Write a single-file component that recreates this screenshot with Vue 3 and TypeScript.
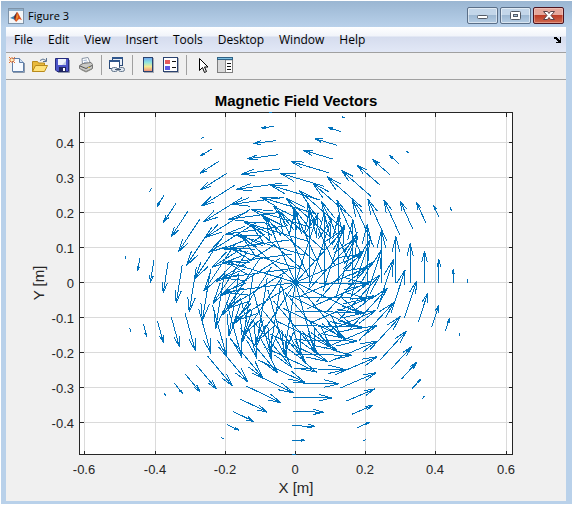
<script setup lang="ts">
interface Tick {
  pos: number
  label: string
}

const menus: string[] = ['File', 'Edit', 'View', 'Insert', 'Tools', 'Desktop', 'Window', 'Help']

// Axes box and origin, in drawing units
const box = { left: 73, right: 506, top: 32, bottom: 374 }
const origin = { x: 289, y: 202 }
const unit = 351

const xTicks: Tick[] = [-0.6, -0.4, -0.2, 0, 0.2, 0.4, 0.6].map((v) => ({
  pos: Math.round(origin.x + v * unit),
  label: String(v),
}))
const yTicks: Tick[] = [-0.4, -0.3, -0.2, -0.1, 0, 0.1, 0.2, 0.3, 0.4].map((v) => ({
  pos: Math.round(origin.y - v * 350),
  label: String(v),
}))

// Azimuthal field sampled on a polar grid; arrow length per ring
const rayCount = 15
const angleStep = (2 * Math.PI * 0.95) / (rayCount - 1)
const ringStep = (0.49 * unit) / 12
const lengths: number[] = [73, 72, 70, 67, 63, 58, 52, 46, 39, 31, 23, 13, 3]

function arrow(ray: number, ring: number): string {
  const a = ray * angleStep
  const x = origin.x + ring * ringStep * Math.cos(a)
  const y = origin.y - ring * ringStep * Math.sin(a)
  const u = -Math.sin(a) * lengths[ring]
  const v = -Math.cos(a) * lengths[ring]
  const tx = x + u
  const ty = y + v
  const alpha = 0.33
  const beta = 0.25
  const p = (px: number, py: number) => `${px.toFixed(1)} ${py.toFixed(1)}`
  const w1 = p(tx - alpha * (u + beta * v), ty - alpha * (v - beta * u))
  const w2 = p(tx - alpha * (u - beta * v), ty - alpha * (v + beta * u))
  return `M${p(x, y)}L${p(tx, ty)}M${w1}L${p(tx, ty)}L${w2}`
}

const field: string = Array.from({ length: rayCount }, (_, ray) =>
  lengths.map((_l, ring) => arrow(ray, ring)).join(''),
).join('')
</script>

<template>
  <main class="window">
    <header class="titlebar">
      <svg class="logo" viewBox="0 0 16 16" aria-hidden="true">
        <rect x="0.5" y="0.5" width="15" height="15" fill="#f4f6f8" stroke="#7f93a8" />
        <rect x="1" y="1" width="14" height="2" fill="#8fb0cc" />
        <path d="M2 10 6 8 9 4 7 12 5 11Z" fill="#3c7fae" />
        <path d="M9 4 6 9 7 13 9 11Z" fill="#7c2418" />
        <path d="M9 4C10 4 12 9 14 12L11 11 8 14 7 12Q8 9 9 4Z" fill="#d9501e" />
        <path d="M9 5 10 9 8 13Z" fill="#f4a031" />
      </svg>
      <h1 class="caption">Figure 3</h1>
      <div class="controls">
        <button type="button" class="control" aria-label="Minimize">
          <svg viewBox="0 0 29 15"><rect x="9.500" y="7.500" width="10" height="3" rx="1" fill="#fff" stroke="#545b66" /></svg>
        </button>
        <button type="button" class="control" aria-label="Maximize">
          <svg viewBox="0 0 29 15">
            <rect x="9.500" y="3.500" width="10" height="8" rx="1" fill="#fff" stroke="#545b66" />
            <rect x="12.500" y="6.500" width="4" height="2" fill="#a9c3dc" stroke="#545b66" />
          </svg>
        </button>
        <button type="button" class="control close" aria-label="Close">
          <svg viewBox="0 0 29 15">
            <path d="M9.500 3.500h4l1.500 2 1.500-2h4l-3.500 4 3.500 4h-4l-1.500-2-1.500 2h-4l3.500-4z" fill="#fff" stroke="#5c4248" />
          </svg>
        </button>
      </div>
    </header>

    <div class="content">
      <nav class="menubar">
        <button v-for="menu in menus" :key="menu" type="button" class="menu">{{ menu }}</button>
        <button type="button" class="dock" aria-label="Dock figure">
          <svg viewBox="0 0 8 8"><path d="M0 1h3v1h1v1h1v1h1V1h1v6H2V6h2V5H3V4H2V3H0z" fill="#000" shape-rendering="crispEdges" /></svg>
        </button>
      </nav>

      <div class="toolbar" role="toolbar" aria-label="Figure tools">
        <button type="button" class="tool" aria-label="New figure">
          <svg viewBox="0 0 16 16">
            <path d="M3.500 1.500h7l4 4v9h-11z" fill="#f6faff" stroke="#5f7ea8" />
            <path d="M10.500 1.500v4h4" fill="#cfe0f4" stroke="#5f7ea8" />
            <path d="M15.500 6v9.500H4" fill="none" stroke="#8c99aa" />
            <path d="M0 0 6 6M6 0 0 6M3 0v6M0 3h6" stroke="#e2702f" />
            <rect x="2" y="2" width="2" height="2" fill="#fff3b8" />
          </svg>
        </button>
        <button type="button" class="tool" aria-label="Open file">
          <svg viewBox="0 0 16 16">
            <path d="M.5 14.500v-10h5l1 1.500h6v3" fill="#e9b93c" stroke="#b88a1c" />
            <path d="M.5 14.500 3.500 8.500h12l-3 6z" fill="#ffe27a" stroke="#b88a1c" />
            <path d="M8 3.500q3-3 6 0M14.500 1v3.500H11" fill="none" stroke="#5c7391" />
          </svg>
        </button>
        <button type="button" class="tool" aria-label="Save figure">
          <svg viewBox="0 0 16 16">
            <path d="M0.500 1.500h13v13H2l-1.500-1.500z" fill="#4c55c8" stroke="#252b7c" />
            <path d="M14.500 3v12.500H3" fill="none" stroke="#9098ad" />
            <rect x="3" y="2" width="8" height="6" fill="#eef2fb" />
            <path d="M7 8 11 4v4z" fill="#c2cee6" />
            <rect x="4" y="10" width="7" height="5" fill="#1f255f" />
            <rect x="8" y="11" width="2" height="3" fill="#fff" />
          </svg>
        </button>
        <button type="button" class="tool" aria-label="Print figure">
          <svg viewBox="0 0 16 16">
            <path d="M4.500 7.500 4 1.500l6-1 2.500 6" fill="#fff" stroke="#8894a5" />
            <path d="M5.500 3.500 9 3M6 5.500 10 5" stroke="#9bb1d0" />
            <path d="M1.500 8.500 5 6.500l8-1 1.500 2v4L8 14.500l-6.500-3z" fill="#c9c9c5" stroke="#777" />
            <path d="M2 9 8 11.500 14 8.500" fill="none" stroke="#555" />
            <path d="M3 12.500 8 15l6-3" fill="none" stroke="#8e8e88" />
            <rect x="10" y="10" width="2" height="1" fill="#d6b53c" />
          </svg>
        </button>
        <span class="divider"></span>
        <button type="button" class="tool" aria-label="Link plot">
          <svg viewBox="0 0 16 16">
            <rect x="3.500" y="0.500" width="10" height="8" fill="#e9eff7" stroke="#2b4a78" />
            <rect x="3" y="0" width="11" height="2" fill="#31578d" />
            <rect x="0.500" y="3.500" width="10" height="8" fill="#fff" stroke="#2b4a78" />
            <rect x="0" y="3" width="11" height="2" fill="#31578d" />
            <rect x="2.500" y="10.500" width="6" height="4" rx="2" fill="#dfe7f0" stroke="#66788e" />
            <rect x="9.500" y="10.500" width="6" height="4" rx="2" fill="#dfe7f0" stroke="#66788e" />
            <path d="M6 12.500h6" stroke="#42556d" />
          </svg>
        </button>
        <span class="divider"></span>
        <button type="button" class="tool" aria-label="Insert colorbar">
          <svg viewBox="0 0 16 16">
            <defs>
              <linearGradient id="spectrum" x1="0" y1="0" x2="0" y2="1">
                <stop offset="0" stop-color="#6ea4f2" />
                <stop offset="0.350" stop-color="#8ee5df" />
                <stop offset="0.650" stop-color="#f5ea92" />
                <stop offset="1" stop-color="#ef8a78" />
              </linearGradient>
            </defs>
            <rect x="4" y="1" width="10" height="15" fill="#a9adb5" />
            <rect x="3.500" y="0.500" width="9" height="14" fill="url(#spectrum)" stroke="#2a426f" />
          </svg>
        </button>
        <button type="button" class="tool" aria-label="Insert legend">
          <svg viewBox="0 0 16 16">
            <rect x="1" y="1" width="15" height="15" fill="#a9adb5" />
            <rect x="0.500" y="0.500" width="14" height="14" fill="#fff" stroke="#2a426f" />
            <rect x="2" y="3" width="5" height="4" fill="#e65c5c" />
            <rect x="2" y="9" width="5" height="4" fill="#5c5ce6" />
            <path d="M9 4.500h4M9 10.500h4" stroke="#111" />
          </svg>
        </button>
        <span class="divider"></span>
        <button type="button" class="tool" aria-label="Edit plot">
          <svg viewBox="0 0 16 16">
            <path d="M5.500 1.500v12l3-3 2 5 2-1-2-4.500h3.500z" fill="#fff" stroke="#000" />
          </svg>
        </button>
        <button type="button" class="tool" aria-label="Open property inspector">
          <svg viewBox="0 0 16 16">
            <rect x="0.500" y="0.500" width="15" height="15" fill="#d9d9d9" stroke="#7e7e7e" />
            <rect x="0" y="0" width="16" height="3" fill="#2f6285" />
            <rect x="1" y="1" width="14" height="1" fill="#7fc0e2" />
            <rect x="9" y="4" width="6" height="11" fill="#fff" />
            <path d="M8.500 3v12" stroke="#8c8c8c" />
            <path d="M10 6.500h4M10 9.500h4M10 12.500h4" stroke="#111" />
          </svg>
        </button>
      </div>

      <svg class="figure" viewBox="0 0 560 421" role="img" aria-label="Magnetic Field Vectors">
        <g class="crisp" transform="translate(0.500 0.500)">
          <rect :x="box.left" :y="box.top" :width="box.right - box.left" :height="box.bottom - box.top" fill="#fff" />
          <g stroke="#dadada">
            <path v-for="t in xTicks" :key="t.label" :d="`M${t.pos} ${box.top}V${box.bottom}`" />
            <path v-for="t in yTicks" :key="t.label" :d="`M${box.left} ${t.pos}H${box.right}`" />
          </g>
          <g stroke="#262626" fill="none">
            <rect :x="box.left" :y="box.top" :width="box.right - box.left" :height="box.bottom - box.top" />
            <path v-for="t in xTicks" :key="t.label" :d="`M${t.pos} ${box.top}v4M${t.pos} ${box.bottom}v-4`" />
            <path v-for="t in yTicks" :key="t.label" :d="`M${box.left} ${t.pos}h4M${box.right} ${t.pos}h-4`" />
          </g>
          <path :d="field" stroke="#0072bd" fill="none" />
        </g>
        <text class="title" x="290" y="26">Magnetic Field Vectors</text>
        <g class="ticks">
          <text v-for="t in xTicks" :key="t.label" :x="t.pos" y="394" text-anchor="middle">{{ t.label }}</text>
          <text v-for="t in yTicks" :key="t.label" x="68" :y="t.pos + 6" text-anchor="end">{{ t.label }}</text>
        </g>
        <text class="axis" x="290" y="413">X [m]</text>
        <text class="axis" transform="translate(38 203) rotate(-90)">Y [m]</text>
      </svg>
    </div>
  </main>
</template>

<style>
body {
  background: #fff;
}
</style>

<style scoped>
.window {
  margin: 1px;
  padding: 0 6px 3px 5px;
  background: linear-gradient(#9ab6d2 0, #b9d1ea 26px, #b9d1ea 100%);
  font-family: "Open Sans", "Noto Sans", sans-serif;
  font-size: 12px;
  color: #000;
}

button {
  margin: 0;
  padding: 0;
  border: 0;
  background: none;
  font: inherit;
  color: inherit;
}

svg {
  display: block;
}

.titlebar {
  display: flex;
  align-items: center;
  height: 26px;
  padding: 0 2px;
}

.logo {
  width: 16px;
  height: 16px;
  margin-top: 3px;
}

.caption {
  flex: 1;
  margin: 3px 0 0 4px;
  font-size: 11px;
  font-weight: 400;
}

.controls {
  display: flex;
  gap: 2px;
  margin-top: 3px;
}

.control {
  box-sizing: border-box;
  width: 31px;
  height: 17px;
  border: 1px solid #5a6f88;
  border-radius: 2px;
  background: linear-gradient(#c3d6e9 0 45%, #9db8d2 50%, #b5cde4);
  box-shadow: inset 0 0 0 1px rgba(255, 255, 255, 0.5);
}

.close {
  border-color: #4c1420;
  background: linear-gradient(#e5a79b 0 45%, #bd3c26 50%, #cf6a50);
  box-shadow: inset 0 0 0 1px rgba(255, 220, 210, 0.4);
}

.content {
  background: #f0f0f0;
}

.menubar {
  display: flex;
  align-items: center;
  gap: 15px;
  height: 25px;
  padding: 0 4px 0 8px;
  border-bottom: 1px solid #a0a0a0;
  background: linear-gradient(#fff 0, #f1f4fa 9px, #d5dcee 10px, #e2e8f6 100%);
}

.dock {
  width: 8px;
  height: 8px;
  margin-left: auto;
}

.toolbar {
  display: flex;
  align-items: center;
  gap: 7px;
  height: 24px;
  padding: 0 3px 2px;
  border-bottom: 1px solid #a0a0a0;
}

.tool {
  width: 16px;
  height: 16px;
}

.divider {
  width: 1px;
  height: 20px;
  background: #a0a0a0;
}

.figure {
  width: 100%;
  height: auto;
  font-family: "Liberation Sans", Arial, sans-serif;
  fill: #262626;
}

.crisp {
  shape-rendering: crispEdges;
}

.title {
  font-size: 15px;
  font-weight: 700;
  text-anchor: middle;
  fill: #000;
}

.ticks {
  font-size: 13px;
}

.axis {
  font-size: 15px;
  text-anchor: middle;
}
</style>
